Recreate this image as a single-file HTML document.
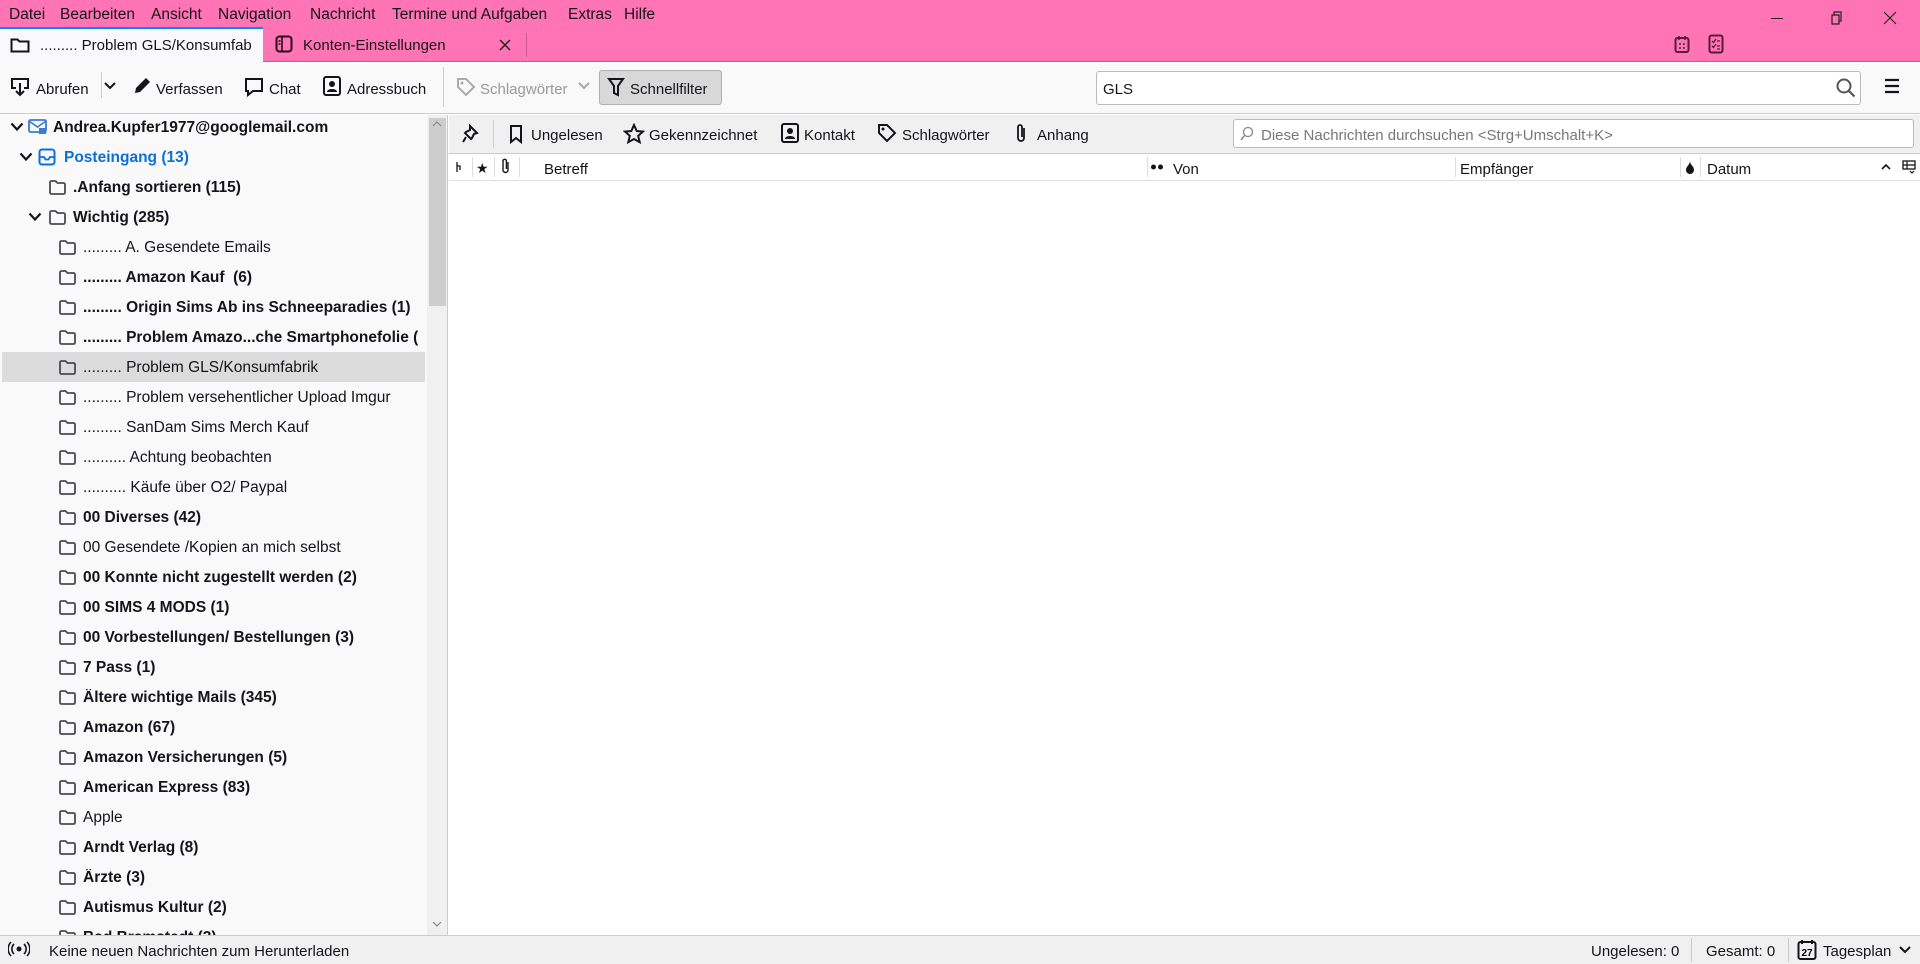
<!DOCTYPE html>
<html><head><meta charset="utf-8"><style>
*{margin:0;padding:0;box-sizing:border-box}
body{width:1920px;height:964px;overflow:hidden;background:#fff;font-family:"Segoe UI","Liberation Sans",sans-serif;font-size:15px;color:#15141a;position:relative}
.a{position:absolute;white-space:nowrap}
.t{margin-top:3px}
svg{position:absolute}
.fi{stroke:#4a4a55;fill:none;stroke-width:1.8;stroke-linejoin:round}
</style></head><body>
<!-- pink header -->
<div class="a" style="left:0;top:0;width:1920px;height:62px;background:#ff74b5;border-bottom:1px solid #c85a8e"></div>
<div class="a t" style="top:3px;left:9px;font-size:15.5px">Datei</div>
<div class="a t" style="top:3px;left:60px;font-size:15.5px">Bearbeiten</div>
<div class="a t" style="top:3px;left:151px;font-size:15.5px">Ansicht</div>
<div class="a t" style="top:3px;left:218px;font-size:15.5px">Navigation</div>
<div class="a t" style="top:3px;left:310px;font-size:15.5px">Nachricht</div>
<div class="a t" style="top:3px;left:392px;font-size:15.5px">Termine und Aufgaben</div>
<div class="a t" style="top:3px;left:568px;font-size:15.5px">Extras</div>
<div class="a t" style="top:3px;left:624px;font-size:15.5px">Hilfe</div>
<div class="a" style="top:18px;left:1771px;width:12px;height:1px;background:#222"></div>
<svg style="left:1829px;top:11px" width="14" height="14"><path d="M3 4h7v9H3zM5 4V1h7v9h-2" fill="none" stroke="#222" stroke-width="1.2"/></svg>
<svg style="left:1883px;top:11px" width="14" height="14"><path d="M1 1l12 12M13 1L1 13" stroke="#222" stroke-width="1.2"/></svg>
<svg style="left:1674px;top:35px" width="16" height="18"><rect x="1.5" y="3" width="13" height="14" rx="2" fill="none" stroke="#5a1a3a" stroke-width="2"/><path d="M5 1v4M11 1v4M5 9h2M9 9h2M5 13h2M9 13h2" stroke="#5a1a3a" stroke-width="1.6"/></svg>
<svg style="left:1708px;top:34px" width="16" height="20"><rect x="1.5" y="1.5" width="13" height="17" rx="2" fill="none" stroke="#5a1a3a" stroke-width="2"/><path d="M4 7l1.5 1.5L8 5M9 7h3M4 12l1.5 1.5L8 10M9 12h3M9 15h3" stroke="#5a1a3a" stroke-width="1.3" fill="none"/></svg>
<!-- tabs -->
<div class="a" style="left:0;top:27px;width:263px;height:36px;background:#f9f9fb;border-top:2px solid #0a84ff"></div>
<svg style="left:10px;top:37px" width="20" height="16"><path d="M1.5 2.5h6l2 2h9v10h-17z" fill="none" stroke="#15141a" stroke-width="2"/></svg>
<div class="a t" style="left:40px;top:34px;width:215px;overflow:hidden">......... Problem GLS/Konsumfab</div>
<svg style="left:275px;top:35px" width="18" height="18"><rect x="1.5" y="1.5" width="15" height="15" rx="3" fill="none" stroke="#2a0a1a" stroke-width="2"/><path d="M7 2v14M3.5 6h2M3.5 9h2" stroke="#2a0a1a" stroke-width="1.6"/></svg>
<div class="a t" style="left:303px;top:34px">Konten-Einstellungen</div>
<svg style="left:499px;top:39px" width="12" height="12"><path d="M1 1l10 10M11 1L1 11" stroke="#222" stroke-width="1.5"/></svg>
<div class="a" style="left:526px;top:33px;width:1px;height:24px;background:#c85a8e"></div>
<!-- toolbar -->
<div class="a" style="left:0;top:63px;width:1920px;height:51px;background:#f9f9fa;border-bottom:1px solid #ccc"></div>
<svg style="left:10px;top:77px" width="20" height="20"><path d="M6 11H2V2h16v9h-4M10 6v12M6 14l4 4 4-4" fill="none" stroke="#15141a" stroke-width="2"/></svg>
<div class="a t" style="left:36px;top:78px">Abrufen</div>
<div class="a" style="left:101px;top:72px;width:1px;height:26px;background:#ccc"></div>
<svg style="left:104px;top:82px" width="12" height="8"><path d="M1 1l5 5 5-5" fill="none" stroke="#15141a" stroke-width="2"/></svg>
<svg style="left:133px;top:77px" width="18" height="18"><path d="M2 16l1-5L13 1l4 4L7 15z" fill="#15141a"/></svg>
<div class="a t" style="left:156px;top:78px">Verfassen</div>
<svg style="left:244px;top:77px" width="20" height="20"><path d="M2 2h16v12H9l-5 4v-4H2z" fill="none" stroke="#15141a" stroke-width="2"/></svg>
<div class="a t" style="left:269px;top:78px">Chat</div>
<svg style="left:322px;top:76px" width="20" height="20"><rect x="2" y="1" width="16" height="18" rx="2" fill="none" stroke="#15141a" stroke-width="2"/><circle cx="10" cy="8" r="3" fill="#15141a"/><path d="M5 16c0-4 10-4 10 0z" fill="#15141a"/></svg>
<div class="a t" style="left:347px;top:78px">Adressbuch</div>
<div class="a" style="left:443px;top:67px;width:1px;height:40px;background:#ccc"></div>
<svg style="left:456px;top:77px" width="20" height="20"><path d="M2 2h8l8 8-8 8-8-8z" fill="none" stroke="#aaa" stroke-width="2"/><circle cx="6" cy="6" r="1.5" fill="#aaa"/></svg>
<div class="a t" style="left:480px;top:78px;color:#999">Schlagwörter</div>
<svg style="left:578px;top:82px" width="12" height="8"><path d="M1 1l5 5 5-5" fill="none" stroke="#aaa" stroke-width="2"/></svg>
<div class="a" style="left:599px;top:70px;width:123px;height:35px;background:#d8d8d8;border:1px solid #b0b0b0;border-radius:3px"></div>
<svg style="left:607px;top:77px" width="18" height="20"><path d="M2 2h14l-5 7v9l-4-2V9z" fill="none" stroke="#15141a" stroke-width="2"/></svg>
<div class="a t" style="left:630px;top:78px">Schnellfilter</div>
<div class="a" style="left:1096px;top:71px;width:765px;height:34px;background:#fff;border:1px solid #bbb;border-radius:3px"></div>
<div class="a t" style="left:1103px;top:78px">GLS</div>
<svg style="left:1835px;top:77px" width="22" height="22"><circle cx="9" cy="9" r="6.5" fill="none" stroke="#555" stroke-width="2"/><path d="M13.5 13.5l6 6" stroke="#555" stroke-width="2.2"/></svg>
<svg style="left:1884px;top:78px" width="16" height="16"><path d="M1 2h14M1 8h14M1 14h14" stroke="#15141a" stroke-width="2.2"/></svg>
<!-- folder pane -->
<div class="a" style="left:0;top:115px;width:448px;height:820px;background:#f9f9fa;border-right:1px solid #ccc"></div>
<div class="a" style="left:427px;top:115px;width:20px;height:820px;background:#f0f0f0"></div>
<div class="a" style="left:429px;top:118px;width:17px;height:188px;background:#cdcdcd"></div>
<svg style="left:432px;top:120px" width="10" height="8"><path d="M1 6l4-4 4 4" fill="none" stroke="#888" stroke-width="1.2"/></svg>
<svg style="left:432px;top:920px" width="10" height="8"><path d="M1 2l4 4 4-4" fill="none" stroke="#888" stroke-width="1.2"/></svg>
<div class="a" style="left:2px;top:352px;width:423px;height:30px;background:#dcdcdc"></div>
<div id="fl"></div>
<!-- quick filter -->
<div class="a" style="left:449px;top:115px;width:1471px;height:39px;background:#f0f0f0;border-bottom:1px solid #ccc"></div>
<svg style="left:461px;top:124px" width="20" height="20"><path d="M9 2l7 7-3 1-2 4-1 1-6-6 1-1 4-2zM5 13l-3 5" fill="none" stroke="#15141a" stroke-width="2"/></svg>
<div class="a" style="left:493px;top:120px;width:1px;height:28px;background:#ccc"></div>
<svg style="left:509px;top:124px" width="14" height="20"><path d="M2 2h10v16l-5-4-5 4z" fill="none" stroke="#15141a" stroke-width="2"/></svg>
<div class="a t" style="left:531px;top:124px">Ungelesen</div>
<svg style="left:623px;top:123px" width="22" height="22"><path d="M11 2l2.7 6 6.3.6-4.8 4.2 1.5 6.4L11 16l-5.7 3.2 1.5-6.4L2 8.6 8.3 8z" fill="none" stroke="#15141a" stroke-width="2"/></svg>
<div class="a t" style="left:649px;top:124px">Gekennzeichnet</div>
<svg style="left:780px;top:123px" width="20" height="20"><rect x="2" y="1" width="16" height="18" rx="2" fill="none" stroke="#15141a" stroke-width="2"/><circle cx="10" cy="8" r="3" fill="#15141a"/><path d="M5 16c0-4 10-4 10 0z" fill="#15141a"/></svg>
<div class="a t" style="left:804px;top:124px">Kontakt</div>
<svg style="left:877px;top:123px" width="20" height="20"><path d="M2 2h8l8 8-8 8-8-8z" fill="none" stroke="#15141a" stroke-width="2"/><circle cx="6" cy="6" r="1.5" fill="#15141a"/></svg>
<div class="a t" style="left:902px;top:124px">Schlagwörter</div>
<svg style="left:1015px;top:122px" width="12" height="22"><path d="M9 6v10a3 3 0 0 1-6 0V5a2 2 0 0 1 4 0v10" fill="none" stroke="#15141a" stroke-width="1.8"/></svg>
<div class="a t" style="left:1037px;top:124px">Anhang</div>
<div class="a" style="left:1233px;top:119px;width:681px;height:29px;background:#fff;border:1px solid #bbb;border-radius:3px"></div>
<svg style="left:1240px;top:126px" width="14" height="16"><circle cx="8" cy="6" r="4.5" fill="none" stroke="#888" stroke-width="1.3"/><path d="M5 9l-4 5" stroke="#888" stroke-width="1.5"/></svg>
<div class="a t" style="left:1261px;top:124px;color:#777">Diese Nachrichten durchsuchen &lt;Strg+Umschalt+K&gt;</div>
<!-- column header -->
<div class="a" style="left:449px;top:154px;width:1471px;height:27px;background:#fff;border-bottom:1px solid #e0e0e0"></div>
<svg style="left:455px;top:160px" width="8" height="14"><path d="M2 2v10M2 6h3v4" fill="none" stroke="#15141a" stroke-width="1.3"/></svg>
<div class="a t" style="left:476px;top:157px;font-size:14px">★</div>
<svg style="left:501px;top:157px" width="10" height="18"><path d="M7 5v8a2.5 2.5 0 0 1-5 0V4a1.7 1.7 0 0 1 3.4 0v8" fill="none" stroke="#15141a" stroke-width="1.4"/></svg>
<div class="a" style="left:472px;top:157px;width:1px;height:20px;background:#ddd"></div>
<div class="a" style="left:494px;top:157px;width:1px;height:20px;background:#ddd"></div>
<div class="a" style="left:519px;top:157px;width:1px;height:20px;background:#ddd"></div>
<div class="a t" style="left:544px;top:158px">Betreff</div>
<div class="a" style="left:1147px;top:157px;width:1px;height:20px;background:#ddd"></div>
<svg style="left:1150px;top:163px" width="14" height="8"><circle cx="3.5" cy="4" r="2.5" fill="#15141a"/><circle cx="10.5" cy="4" r="2.5" fill="#15141a"/></svg>
<div class="a t" style="left:1173px;top:158px">Von</div>
<div class="a" style="left:1455px;top:157px;width:1px;height:20px;background:#ddd"></div>
<div class="a t" style="left:1460px;top:158px">Empfänger</div>
<div class="a" style="left:1680px;top:157px;width:1px;height:20px;background:#ddd"></div>
<svg style="left:1685px;top:160px" width="10" height="14"><path d="M5 1c0 4-4 5-4 9a4 4 0 0 0 8 0c0-4-4-5-4-9z" fill="#15141a"/></svg>
<div class="a" style="left:1700px;top:157px;width:1px;height:20px;background:#ddd"></div>
<div class="a t" style="left:1707px;top:158px">Datum</div>
<svg style="left:1881px;top:163px" width="10" height="8"><path d="M1 6l4-4 4 4" fill="none" stroke="#15141a" stroke-width="1.6"/></svg>
<svg style="left:1902px;top:160px" width="14" height="14"><rect x="1" y="1" width="12" height="8" fill="none" stroke="#15141a" stroke-width="1.3"/><path d="M1 5h12M5 1v8M8 11l2 2 2-2" stroke="#15141a" stroke-width="1.2" fill="none"/></svg>
<!-- status bar -->
<div class="a" style="left:0;top:935px;width:1920px;height:29px;background:#f0f0f0;border-top:1px solid #ccc"></div>
<svg style="left:8px;top:941px" width="22" height="16"><circle cx="11" cy="8" r="2.5" fill="#15141a"/><path d="M6 3a7 7 0 0 0 0 10M16 3a7 7 0 0 1 0 10M3 1a10 10 0 0 0 0 14M19 1a10 10 0 0 1 0 14" fill="none" stroke="#15141a" stroke-width="1.6"/></svg>
<div class="a t" style="left:49px;top:940px">Keine neuen Nachrichten zum Herunterladen</div>
<div class="a t" style="left:1591px;top:940px">Ungelesen: 0</div>
<div class="a" style="left:1691px;top:938px;width:1px;height:24px;background:#ccc"></div>
<div class="a t" style="left:1706px;top:940px">Gesamt: 0</div>
<div class="a" style="left:1788px;top:938px;width:1px;height:24px;background:#ccc"></div>
<svg style="left:1797px;top:939px" width="20" height="21"><rect x="1.5" y="3" width="17" height="17" rx="2" fill="none" stroke="#15141a" stroke-width="2"/><path d="M5 1v4M15 1v4" stroke="#15141a" stroke-width="2"/><text x="10" y="17" font-size="10" text-anchor="middle" font-family="Liberation Sans" font-weight="bold">27</text></svg>
<div class="a t" style="left:1823px;top:940px">Tagesplan</div>
<svg style="left:1899px;top:946px" width="12" height="8"><path d="M1 1l5 5 5-5" fill="none" stroke="#15141a" stroke-width="2"/></svg>
<script>
var rows=[
[10,28,53,"Andrea.Kupfer1977@googlemail.com",1,"acct"],
[19,38,64,"Posteingang (13)",1,"inbox"],
[0,48,73,".Anfang sortieren (115)",1],
[28,48,73,"Wichtig (285)",1],
[0,58,83,"......... A. Gesendete Emails",0],
[0,58,83,"......... Amazon Kauf&nbsp; (6)",1],
[0,58,83,"......... Origin Sims Ab ins Schneeparadies (1)",1],
[0,58,83,"......... Problem Amazo...che Smartphonefolie (",1],
[0,58,83,"......... Problem GLS/Konsumfabrik",0],
[0,58,83,"......... Problem versehentlicher Upload Imgur",0],
[0,58,83,"......... SanDam Sims Merch Kauf",0],
[0,58,83,".......... Achtung beobachten",0],
[0,58,83,".......... Käufe über O2/ Paypal",0],
[0,58,83,"00 Diverses (42)",1],
[0,58,83,"00 Gesendete /Kopien an mich selbst",0],
[0,58,83,"00 Konnte nicht zugestellt werden (2)",1],
[0,58,83,"00 SIMS 4 MODS (1)",1],
[0,58,83,"00 Vorbestellungen/ Bestellungen (3)",1],
[0,58,83,"7 Pass (1)",1],
[0,58,83,"Ältere wichtige Mails (345)",1],
[0,58,83,"Amazon (67)",1],
[0,58,83,"Amazon Versicherungen (5)",1],
[0,58,83,"American Express (83)",1],
[0,58,83,"Apple",0],
[0,58,83,"Arndt Verlag (8)",1],
[0,58,83,"Ärzte (3)",1],
[0,58,83,"Autismus Kultur (2)",1],
[0,58,83,"Bad Bramstedt (3)",1]];
var h="";
rows.forEach(function(r,i){
 var y=127+i*30;
 if(y>960)return;
 if(r[0])h+='<svg style="left:'+r[0]+'px;top:'+(y-5)+'px" width="14" height="10"><path d="M1.5 1.5l5.5 6 5.5-6" fill="none" stroke="#15141a" stroke-width="2.2"/></svg>';
 if(r[5]=="acct")h+='<svg style="left:'+r[1]+'px;top:'+(y-9)+'px" width="20" height="18"><rect x="1" y="2" width="17" height="12" rx="1.5" fill="none" stroke="#3a7bd5" stroke-width="1.8"/><path d="M1 3l8.5 6L18 3" fill="none" stroke="#3a7bd5" stroke-width="1.6"/><rect x="11" y="10" width="7" height="6" fill="#3a7bd5"/></svg>';
 else if(r[5]=="inbox")h+='<svg style="left:'+r[1]+'px;top:'+(y-9)+'px" width="18" height="18"><rect x="1.5" y="1.5" width="15" height="15" rx="2.5" fill="none" stroke="#0b6fd8" stroke-width="2"/><path d="M2 9h4l1.5 2.5h3L12 9h4" fill="none" stroke="#0b6fd8" stroke-width="1.8"/></svg>';
 else h+='<svg style="left:'+r[1]+'px;top:'+(y-8)+'px" width="19" height="16"><path d="M2 3.5a1.5 1.5 0 0 1 1.5-1.5h4l2 2h6a1.5 1.5 0 0 1 1.5 1.5v8a1.5 1.5 0 0 1-1.5 1.5h-12A1.5 1.5 0 0 1 2 13.5z" class="fi"/></svg>';
 var st=r[4]?'font-weight:bold;':'';
 if(r[5]=="inbox")st+='color:#0b6fd8;';
 var w=r[5]=="acct"?'':'max-width:'+(427-r[2])+'px;overflow:hidden;';
 h+='<div class="a" style="left:'+r[2]+'px;top:'+(y-8)+'px;font-size:15.5px;'+st+w+'">'+r[3]+'</div>';
});
document.getElementById("fl").outerHTML='<div class="a" style="left:0;top:115px;width:427px;height:820px;overflow:hidden"><div style="position:relative;top:-115px">'+h+'</div></div>';
</script>
</body></html>
